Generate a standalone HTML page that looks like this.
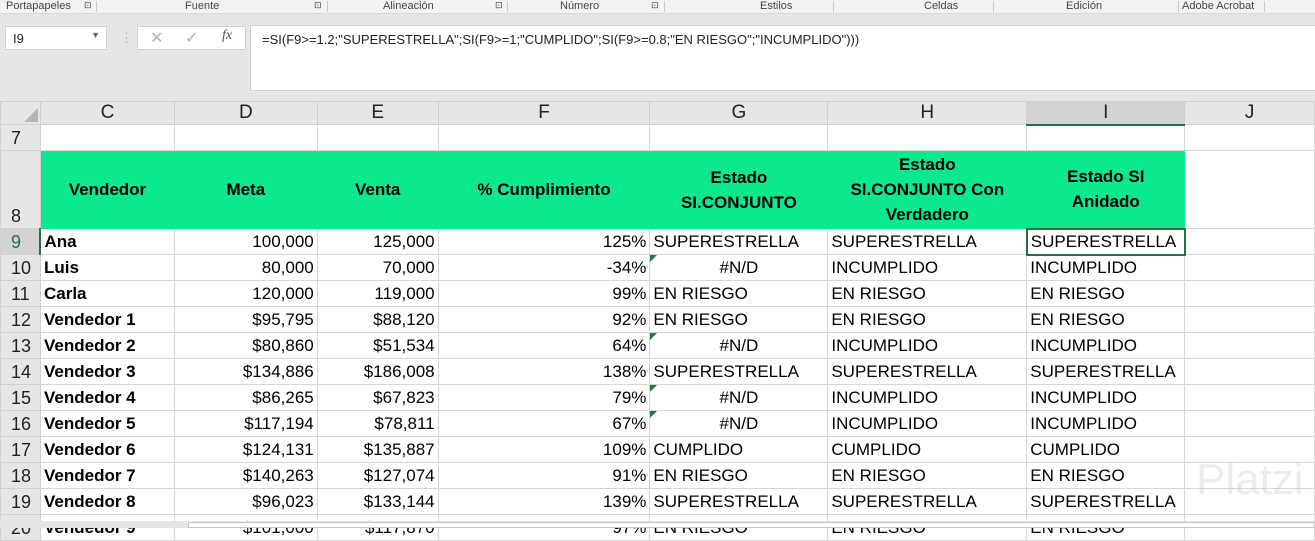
<!DOCTYPE html>
<html><head><meta charset="utf-8">
<style>
*{margin:0;padding:0;box-sizing:border-box}
body{width:1315px;height:528px;overflow:hidden;background:#fff;font-family:"Liberation Sans",sans-serif;position:relative}
.rib{position:absolute;left:0;top:0;width:1315px;height:14px;background:#f3f3f3;font-size:11px;color:#444;border-bottom:1px solid #d8d8d8}
.rib span{position:absolute;top:0}
.rib i{position:absolute;top:1px;width:1px;height:11px;background:#c8c8c8}
.bar{position:absolute;left:0;top:14px;width:1315px;height:87px;background:#e6e6e6}
.box{position:absolute;background:#fff;border:1px solid #d0d0d0}
table{position:absolute;left:0;top:101px;border-collapse:collapse;table-layout:fixed;font-size:17px;color:#000}
td{border:1px solid #d6d6d6;height:26px;padding:0 3px;white-space:nowrap;overflow:hidden;line-height:24px}
tr.hr td{height:23px;line-height:20px}
td.h{background:#e6e6e6;color:#222;text-align:center;border-color:#d0d0d0;font-size:19px}
td.rh{background:#e6e6e6;color:#222;text-align:left;padding-left:10px;border-color:#d0d0d0;font-size:18px}
td.r{text-align:right}
td.c{text-align:center}
td.b{font-weight:bold}
tr.g td{height:78px}
tr.g td.gg{background:#0be88e;border-color:#0be88e;font-weight:bold;text-align:center;line-height:25px;white-space:normal;font-size:17px}
.tri{position:relative}
.tri:before{content:"";position:absolute;left:0;top:0;border-top:7px solid #1e7a3a;border-right:7px solid transparent}
</style></head><body>
<div class="rib">
<span style="left:6px">Portapapeles</span><span style="left:84px;font-size:9px">⊡</span><i style="left:96px"></i>
<span style="left:185px">Fuente</span><span style="left:314px;font-size:9px">⊡</span><i style="left:327px"></i>
<span style="left:383px">Alineación</span><span style="left:495px;font-size:9px">⊡</span><i style="left:507px"></i>
<span style="left:560px">Número</span><span style="left:651px;font-size:9px">⊡</span><i style="left:664px"></i>
<span style="left:760px">Estilos</span><i style="left:833px"></i>
<span style="left:924px">Celdas</span><i style="left:993px"></i>
<span style="left:1066px">Edición</span><i style="left:1178px"></i>
<span style="left:1182px">Adobe Acrobat</span><i style="left:1264px"></i>
</div>
<div class="bar"></div>
<div class="box" style="left:5px;top:26px;width:102px;height:24px;font-size:13px;padding:4px 7px;color:#222">I9<span style="position:absolute;right:6px;top:3px;font-size:9px;color:#666">▼</span></div>
<div style="position:absolute;left:120px;top:30px;color:#aaa;font-size:13px">⋮</div>
<div class="box" style="left:137px;top:26px;width:109px;height:24px;font-size:16px;color:#b0b0b0"><span style="position:absolute;left:12px;top:1px">✕</span><span style="position:absolute;left:47px;top:1px">✓</span><span style="position:absolute;left:84px;top:1px;color:#555;font-family:'Liberation Serif',serif;font-style:italic;font-size:14px">fx</span></div>
<div class="box" style="left:250px;top:25px;width:1070px;height:66px;font-size:13px;padding:6px 11px;color:#222">=SI(F9&gt;=1.2;"SUPERESTRELLA";SI(F9&gt;=1;"CUMPLIDO";SI(F9&gt;=0.8;"EN RIESGO";"INCUMPLIDO")))</div>
<table>
<colgroup><col style="width:40px"><col style="width:134px"><col style="width:143px"><col style="width:121px"><col style="width:212px"><col style="width:178px"><col style="width:199px"><col style="width:158px"><col style="width:130px"></colgroup>
<tr class="hr"><td class="h" style="position:relative"><span style="position:absolute;right:2px;bottom:2px;border-bottom:14px solid #b5b5b5;border-left:14px solid transparent"></span></td><td class="h">C</td><td class="h">D</td><td class="h">E</td><td class="h">F</td><td class="h">G</td><td class="h">H</td><td class="h" style="background:#d3d3d3;border-bottom:2px solid #217346">I</td><td class="h">J</td></tr>
<tr><td class="rh">7</td><td></td><td></td><td></td><td></td><td></td><td></td><td></td><td></td></tr>
<tr class="g"><td class="rh" style="vertical-align:bottom">8</td><td class="gg">Vendedor</td><td class="gg">Meta</td><td class="gg">Venta</td><td class="gg">% Cumplimiento</td><td class="gg">Estado<br>SI.CONJUNTO</td><td class="gg">Estado<br>SI.CONJUNTO Con<br>Verdadero</td><td class="gg">Estado SI<br>Anidado</td><td></td></tr>
<tr><td class="rh" style="background:#d3d3d3;color:#217346;border-right:2px solid #217346">9</td><td class="b">Ana</td><td class="r">100,000</td><td class="r">125,000</td><td class="r">125%</td><td>SUPERESTRELLA</td><td>SUPERESTRELLA</td><td style="border:2px solid #217346">SUPERESTRELLA</td><td></td></tr>
<tr><td class="rh">10</td><td class="b">Luis</td><td class="r">80,000</td><td class="r">70,000</td><td class="r">-34%</td><td class="c tri">#N/D</td><td>INCUMPLIDO</td><td>INCUMPLIDO</td><td></td></tr>
<tr><td class="rh">11</td><td class="b">Carla</td><td class="r">120,000</td><td class="r">119,000</td><td class="r">99%</td><td>EN RIESGO</td><td>EN RIESGO</td><td>EN RIESGO</td><td></td></tr>
<tr><td class="rh">12</td><td class="b">Vendedor 1</td><td class="r">$95,795</td><td class="r">$88,120</td><td class="r">92%</td><td>EN RIESGO</td><td>EN RIESGO</td><td>EN RIESGO</td><td></td></tr>
<tr><td class="rh">13</td><td class="b">Vendedor 2</td><td class="r">$80,860</td><td class="r">$51,534</td><td class="r">64%</td><td class="c tri">#N/D</td><td>INCUMPLIDO</td><td>INCUMPLIDO</td><td></td></tr>
<tr><td class="rh">14</td><td class="b">Vendedor 3</td><td class="r">$134,886</td><td class="r">$186,008</td><td class="r">138%</td><td>SUPERESTRELLA</td><td>SUPERESTRELLA</td><td>SUPERESTRELLA</td><td></td></tr>
<tr><td class="rh">15</td><td class="b">Vendedor 4</td><td class="r">$86,265</td><td class="r">$67,823</td><td class="r">79%</td><td class="c tri">#N/D</td><td>INCUMPLIDO</td><td>INCUMPLIDO</td><td></td></tr>
<tr><td class="rh">16</td><td class="b">Vendedor 5</td><td class="r">$117,194</td><td class="r">$78,811</td><td class="r">67%</td><td class="c tri">#N/D</td><td>INCUMPLIDO</td><td>INCUMPLIDO</td><td></td></tr>
<tr><td class="rh">17</td><td class="b">Vendedor 6</td><td class="r">$124,131</td><td class="r">$135,887</td><td class="r">109%</td><td>CUMPLIDO</td><td>CUMPLIDO</td><td>CUMPLIDO</td><td></td></tr>
<tr><td class="rh">18</td><td class="b">Vendedor 7</td><td class="r">$140,263</td><td class="r">$127,074</td><td class="r">91%</td><td>EN RIESGO</td><td>EN RIESGO</td><td>EN RIESGO</td><td></td></tr>
<tr><td class="rh">19</td><td class="b">Vendedor 8</td><td class="r">$96,023</td><td class="r">$133,144</td><td class="r">139%</td><td>SUPERESTRELLA</td><td>SUPERESTRELLA</td><td>SUPERESTRELLA</td><td></td></tr>
<tr><td class="rh">20</td><td class="b">Vendedor 9</td><td class="r">$101,000</td><td class="r">$117,870</td><td class="r">97%</td><td>EN RIESGO</td><td>EN RIESGO</td><td>EN RIESGO</td><td></td></tr>
</table>
<div style="position:absolute;left:1196px;top:455px;font-size:44px;color:rgba(200,200,200,0.35)">Platzi</div>
<div style="position:absolute;left:0;top:521px;width:1315px;height:7px;background:#e6e6e6"></div>
<div style="position:absolute;left:188px;top:522px;width:1127px;height:6px;background:#fff;border:1px solid #c4c4c4"></div>
</body></html>
